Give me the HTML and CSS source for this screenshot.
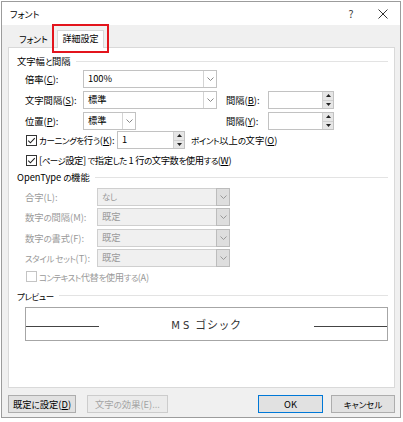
FILE: index.html
```html
<!DOCTYPE html>
<html lang="ja">
<head>
<meta charset="utf-8">
<title>フォント</title>
<link rel="stylesheet" href="styles.css">
</head>
<body>
<div class="window">
  <div class="titlebar">
    <span class="title"><span class="k">フォント</span></span>
    <span class="help">?</span>
    <span class="close"><svg width="10" height="10" viewBox="0 0 10 10"><path d="M0.5 0.5L9.5 9.5M9.5 0.5L0.5 9.5" stroke="#333" stroke-width="1" fill="none"/></svg></span>
  </div>
  <div class="client">
    <div class="tabs">
      <div class="tab"><span class="k">フォント</span></div>
      <div class="tab active">詳細設定<span class="highlight"></span></div>
    </div>
    <div class="panel">
      <div class="ghead"><span>文字幅<span class="k">と</span>間隔</span><i class="rule"></i></div>
      <div class="grid1">
        <span class="lbl c1">倍率(<u>C</u>):</span>
        <div class="combo c2"><span class="val">100%</span><span class="drop"><svg width="7" height="4" viewBox="0 0 7 4"><path d="M0.5 0.5L3.5 3.5L6.5 0.5" stroke="#888" fill="none"/></svg></span></div>

        <span class="lbl c1">文字間隔(<u>S</u>):</span>
        <div class="combo c2"><span class="val">標準</span><span class="drop"><svg width="7" height="4" viewBox="0 0 7 4"><path d="M0.5 0.5L3.5 3.5L6.5 0.5" stroke="#888" fill="none"/></svg></span></div>
        <span class="lbl c4">間隔(<u>B</u>):</span>
        <div class="spin c5"><span class="val"></span><span class="btns"><span class="sb"><svg width="5" height="3" viewBox="0 0 5 3"><path d="M2.5 0L5 3H0z" fill="#222"/></svg></span><span class="sb"><svg width="5" height="3" viewBox="0 0 5 3"><path d="M0 0H5L2.5 3z" fill="#222"/></svg></span></span></div>

        <span class="lbl c1">位置(<u>P</u>):</span>
        <div class="combo c2 short"><span class="val">標準</span><span class="drop"><svg width="7" height="4" viewBox="0 0 7 4"><path d="M0.5 0.5L3.5 3.5L6.5 0.5" stroke="#888" fill="none"/></svg></span></div>
        <span class="lbl c4">間隔(<u>Y</u>):</span>
        <div class="spin c5"><span class="val"></span><span class="btns"><span class="sb"><svg width="5" height="3" viewBox="0 0 5 3"><path d="M2.5 0L5 3H0z" fill="#222"/></svg></span><span class="sb"><svg width="5" height="3" viewBox="0 0 5 3"><path d="M0 0H5L2.5 3z" fill="#222"/></svg></span></span></div>
      </div>

      <div class="row kern">
        <span class="chk-wrap"><svg class="chk" width="11" height="11" viewBox="0 0 11 11"><rect x="0.5" y="0.5" width="10" height="10" fill="#fff" stroke="#333"/><path d="M2.2 5.6L4.4 7.8L8.8 3.2" stroke="#222" stroke-width="1.1" fill="none"/></svg><span><span class="k">カーニングを</span>行<span class="k">う</span>(<u>K</u>):</span></span>
        <div class="spin kspin"><span class="val">1</span><span class="btns"><span class="sb"><svg width="5" height="3" viewBox="0 0 5 3"><path d="M2.5 0L5 3H0z" fill="#222"/></svg></span><span class="sb"><svg width="5" height="3" viewBox="0 0 5 3"><path d="M0 0H5L2.5 3z" fill="#222"/></svg></span></span></div>
        <span class="after"><span class="k">ポイント</span>以上<span class="k">の</span>文字(<u>O</u>)</span>
      </div>

      <div class="row chkrow">
        <svg class="chk" width="11" height="11" viewBox="0 0 11 11"><rect x="0.5" y="0.5" width="10" height="10" fill="#fff" stroke="#333"/><path d="M2.2 5.6L4.4 7.8L8.8 3.2" stroke="#222" stroke-width="1.1" fill="none"/></svg>
        <span class="tight">[<span class="k">ページ</span>設定] <span class="k">で</span>指定<span class="k">した</span> 1 行<span class="k">の</span>文字数<span class="k">を</span>使用<span class="k">する</span>(<u>W</u>)</span>
      </div>

      <div class="ghead g2"><span>OpenType <span class="k">の</span>機能</span><i class="rule"></i></div>
      <div class="grid2">
        <span class="lbl dis">合字(L):</span>
        <div class="combo dis"><span class="val"><span class="k">なし</span></span><span class="drop"><svg width="7" height="4" viewBox="0 0 7 4"><path d="M0.5 0.5L3.5 3.5L6.5 0.5" stroke="#999" fill="none"/></svg></span></div>
        <span class="lbl dis">数字<span class="k">の</span>間隔(M):</span>
        <div class="combo dis"><span class="val">既定</span><span class="drop"><svg width="7" height="4" viewBox="0 0 7 4"><path d="M0.5 0.5L3.5 3.5L6.5 0.5" stroke="#999" fill="none"/></svg></span></div>
        <span class="lbl dis">数字<span class="k">の</span>書式(F):</span>
        <div class="combo dis"><span class="val">既定</span><span class="drop"><svg width="7" height="4" viewBox="0 0 7 4"><path d="M0.5 0.5L3.5 3.5L6.5 0.5" stroke="#999" fill="none"/></svg></span></div>
        <span class="lbl dis"><span class="k">スタイル セット</span>(T):</span>
        <div class="combo dis"><span class="val">既定</span><span class="drop"><svg width="7" height="4" viewBox="0 0 7 4"><path d="M0.5 0.5L3.5 3.5L6.5 0.5" stroke="#999" fill="none"/></svg></span></div>
      </div>

      <div class="row chkrow ctx">
        <svg class="chk" width="11" height="11" viewBox="0 0 11 11"><rect x="0.5" y="0.5" width="10" height="10" fill="#fff" stroke="#c4c4c4"/></svg>
        <span class="dis tight"><span class="k">コンテキスト</span>代替<span class="k">を</span>使用<span class="k">する</span>(A)</span>
      </div>

      <div class="ghead g3"><span><span class="k">プレビュー</span></span><i class="rule"></i></div>
      <div class="preview">
        <i class="pline"></i>
        <span class="ptext"><span class="pl">MS</span> ゴシック</span>
        <i class="pline"></i>
      </div>
    </div>

    <div class="buttons">
      <button class="btn b-default">既定<span class="k">に</span>設定(<u>D</u>)</button>
      <button class="btn b-effect" disabled>文字<span class="k">の</span>効果(E)...</button>
      <span class="spacer"></span>
      <button class="btn b-ok">OK</button>
      <button class="btn b-cancel"><span class="k">キャンセル</span></button>
    </div>
  </div>
</div>
</body>
</html>
```

FILE: styles.css
```css
* { box-sizing: border-box; }
html, body { margin: 0; padding: 0; }
body {
  width: 403px;
  height: 422px;
  overflow: hidden;
  background: #ffffff;
  font-family: "Noto Sans CJK JP", sans-serif;
  font-size: 9.3px;
  color: #000;
  font-feature-settings: "palt";
}
u { text-decoration: underline; text-underline-offset: 1px; }
.k { font-size: 8.5px; letter-spacing: -0.4px; }
.tight { letter-spacing: -0.35px; }
.tight .k { letter-spacing: -0.6px; }

.window {
  margin: 1px 0 0 1px;
  width: 400px;
  height: 417px;
  border: 1px solid #9c9c9c;
  background: #f0f0f0;
  display: flex;
  flex-direction: column;
}

.titlebar {
  flex: none;
  height: 23px;
  background: #fff;
  display: flex;
  align-items: center;
  padding-left: 8px;
}
.title { flex: 1; font-size: 10.5px; }
.title .k { font-size: 9px; letter-spacing: 0; }
.help { width: 12px; font-size: 10.5px; color: #333; text-align: center; margin-right: 21px; }
.close { width: 10px; height: 10px; display: flex; margin-right: 12px; }

.client {
  flex: 1;
  display: flex;
  flex-direction: column;
  padding: 0 5px 0 6px;
}

.tabs {
  flex: none;
  height: 22px;
  display: flex;
  align-items: flex-end;
  padding-left: 2px;
}
.tab {
  width: 47px;
  height: 15px;
  line-height: 14px;
  text-align: center;
}
.tab .k { letter-spacing: 0; font-size: 8.8px; }
.tab.active {
  position: relative;
  z-index: 1;
  height: 18px;
  line-height: 15px;
  margin-bottom: -1px;
  background: #fff;
  border: 1px solid #d9d9d9;
  border-bottom: none;
  font-size: 9px;
}
.highlight {
  position: absolute;
  left: -6px;
  top: -7px;
  width: 57px;
  height: 29px;
  border: 2px solid #e3141c;
}

.panel {
  flex: none;
  height: 341px;
  background: #fff;
  border: 1px solid #d9d9d9;
  padding: 6px 6px 0 0;
}

.ghead {
  display: flex;
  align-items: center;
  height: 14px;
  padding-left: 8px;
  white-space: nowrap;
}
.ghead .rule { flex: 1; height: 1px; background: #e3e3e3; margin-left: 5px; }
.g2 { margin-top: 2px; }
.g3 { margin-top: 5px; }

.lbl { white-space: nowrap; }
.dis { color: #9a9a9a; }

.grid1 {
  display: grid;
  grid-template-columns: 58px 134px 9px 42px 66px;
  grid-auto-rows: 18px;
  row-gap: 3px;
  align-items: center;
  margin: 2px 0 0 16px;
}
.c1 { grid-column: 1; }
.c2 { grid-column: 2; }
.c4 { grid-column: 4; }
.c5 { grid-column: 5; }
.short { width: 53px; }

.combo {
  height: 18px;
  border: 1px solid #c2c2c2;
  background: #fff;
  display: flex;
}
.combo .val { flex: 1; padding-left: 4px; line-height: 15px; white-space: nowrap; }
.combo .drop {
  width: 13px;
  border-left: 1px solid #d4d4d4;
  display: flex;
  align-items: center;
  justify-content: center;
}
.combo.dis { background: #f0f0f0; border-color: #cfcfcf; }
.combo.dis .drop { background: #dedede; border: 1px solid #bcbcbc; margin: -1px -1px -1px 0; width: 14px; }

.spin {
  height: 18px;
  border: 1px solid #c2c2c2;
  background: #fff;
  display: flex;
}
.spin .val { flex: 1; padding-left: 4px; line-height: 15px; }
.spin .btns {
  width: 11px;
  display: flex;
  flex-direction: column;
  border-left: 1px solid #d0d0d0;
}
.spin .sb {
  flex: 1;
  background: #e6e6e6;
  display: flex;
  align-items: center;
  justify-content: center;
}
.spin .sb + .sb { border-top: 1px solid #cfcfcf; }

.row { display: flex; align-items: center; margin-left: 16px; }
.kern { height: 18px; margin-top: 1px; }
.chk-wrap { width: 92px; display: flex; align-items: center; white-space: nowrap; }
.chk { flex: none; margin: 0 2px 0 1px; }
.kspin { width: 68px; }
.after { margin-left: 6px; white-space: nowrap; }
.chkrow { height: 16px; margin-top: 3px; white-space: nowrap; }
.ctx { height: 14px; margin-top: 3px; }

.grid2 {
  display: grid;
  grid-template-columns: 72px 133px;
  grid-auto-rows: 18px;
  row-gap: 2.33px;
  align-items: center;
  margin: 4px 0 0 16px;
}

.preview {
  margin: 4px 0 0 16px;
  height: 34px;
  border: 1px solid #a6a6a6;
  display: flex;
  align-items: center;
  background: #fff;
}
.pline { flex: none; width: 73px; height: 1px; background: #444; margin-top: 6px; }
.ptext {
  flex: 1;
  text-align: center;
  font-family: "Noto Sans CJK JP", sans-serif;
  font-size: 11px;
  font-feature-settings: normal;
  color: #333;
  letter-spacing: 0.6px;
}
.pl { font-family: "DejaVu Sans", sans-serif; font-size: 10px; letter-spacing: 3px; }

.buttons {
  display: flex;
  margin-top: 7px;
  height: 18px;
}
.spacer { flex: 1; }
.btn {
  height: 18px;
  padding: 0;
  border: 1px solid #adadad;
  background: #e1e1e1;
  font-family: inherit;
  font-size: 9.3px;
  font-feature-settings: "palt";
  color: #000;
  line-height: 15px;
}
.btn .k { letter-spacing: 0; }
.b-default { width: 68px; }
.b-effect { width: 81px; margin-left: 11px; color: #a3a3a3; border-color: #cccccc; background: #ebebeb; }
.b-ok { width: 65px; border-color: #0078d7; margin-right: 8px; }
.b-cancel { width: 64px; }
```
